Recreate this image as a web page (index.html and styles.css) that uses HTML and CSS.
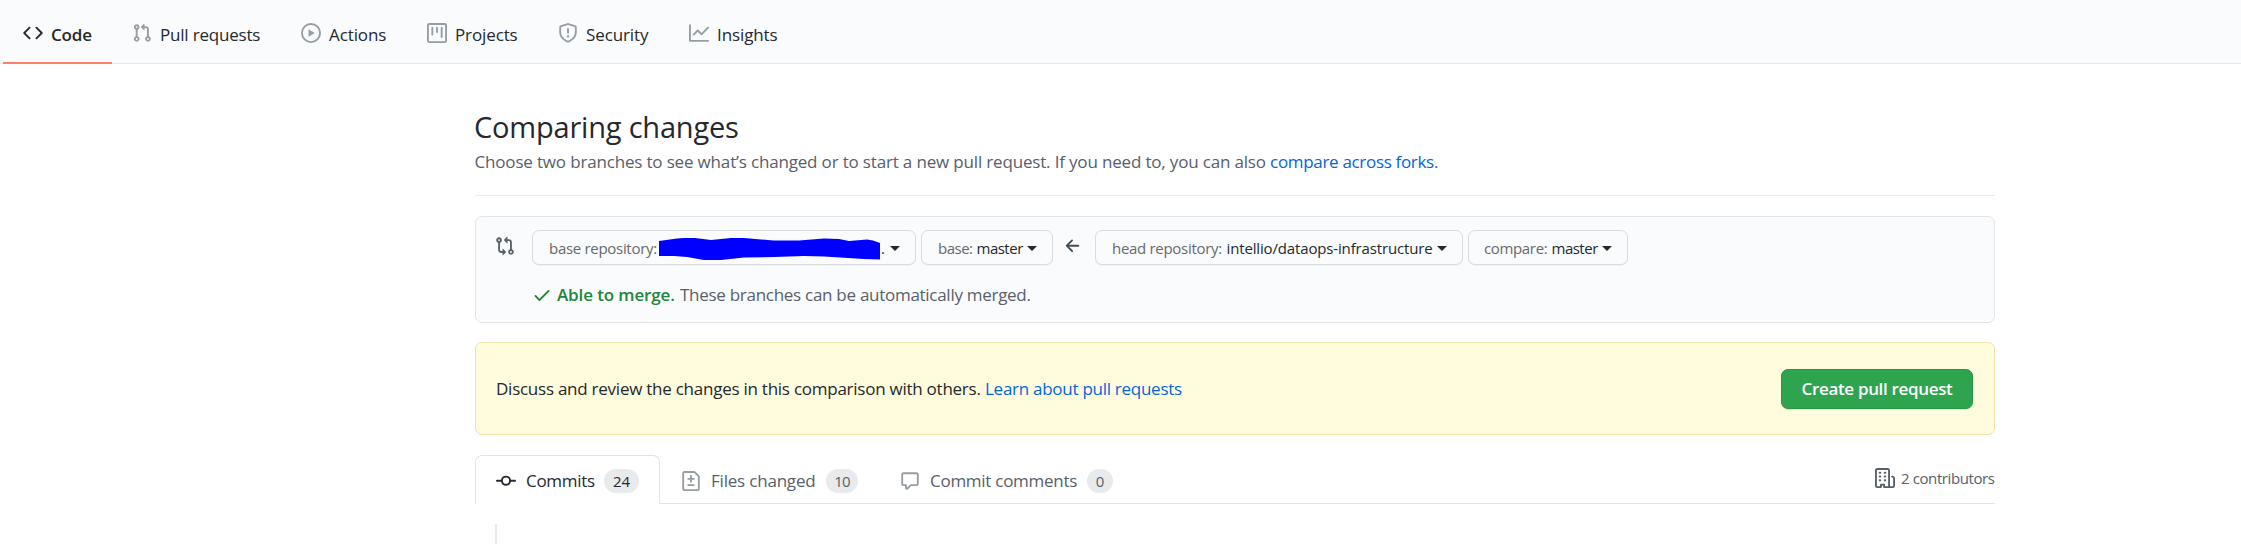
FILE: index.html
```html
<!DOCTYPE html>
<html lang="en">
<head>
<meta charset="utf-8">
<title>Comparing changes</title>
<link rel="stylesheet" href="styles.css">
</head>
<body>
<nav class="repo-nav">
  <a class="nav-item active"><svg class="icon" viewBox="0 0 16 16"><path fill-rule="evenodd" d="M4.72 3.22a.75.75 0 011.06 1.06L2.06 8l3.72 3.72a.75.75 0 11-1.06 1.06L.47 8.53a.75.75 0 010-1.06l4.25-4.25zm6.56 0a.75.75 0 10-1.06 1.06L13.94 8l-3.72 3.72a.75.75 0 101.06 1.06l4.25-4.25a.75.75 0 000-1.06l-4.25-4.25z"/></svg><span class="label w-code">Code</span></a>
  <a class="nav-item"><svg class="icon" viewBox="0 0 16 16"><path fill-rule="evenodd" d="M7.177 3.073L9.573.677A.25.25 0 0110 .854v4.792a.25.25 0 01-.427.177L7.177 3.427a.25.25 0 010-.354zM3.75 2.5a.75.75 0 100 1.5.75.75 0 000-1.5zm-2.25.75a2.25 2.25 0 113 2.122v5.256a2.251 2.251 0 11-1.5 0V5.372A2.25 2.25 0 011.5 3.25zM11 2.5h-1V4h1a1 1 0 011 1v5.628a2.251 2.251 0 101.5 0V5A2.5 2.5 0 0011 2.5zm1 10.25a.75.75 0 111.5 0 .75.75 0 01-1.5 0zM3.75 12a.75.75 0 100 1.5.75.75 0 000-1.5z"/></svg><span class="label w-pulls">Pull requests</span></a>
  <a class="nav-item"><svg class="icon" viewBox="0 0 16 16"><path fill-rule="evenodd" d="M1.5 8a6.5 6.5 0 1113 0 6.5 6.5 0 01-13 0zM8 0a8 8 0 100 16A8 8 0 008 0zM6.379 5.227A.25.25 0 006 5.442v5.117a.25.25 0 00.379.214l4.264-2.559a.25.25 0 000-.428L6.379 5.227z"/></svg><span class="label w-actions">Actions</span></a>
  <a class="nav-item"><svg class="icon" viewBox="0 0 16 16"><path fill-rule="evenodd" d="M1.75 0A1.75 1.75 0 000 1.75v12.5C0 15.216.784 16 1.75 16h12.5A1.75 1.75 0 0016 14.25V1.75A1.75 1.75 0 0014.25 0H1.75zM1.5 1.75a.25.25 0 01.25-.25h12.5a.25.25 0 01.25.25v12.5a.25.25 0 01-.25.25H1.75a.25.25 0 01-.25-.25V1.75zM11.75 3a.75.75 0 00-.75.75v7.5a.75.75 0 001.5 0v-7.5a.75.75 0 00-.75-.75zm-8.25.75a.75.75 0 011.5 0v5.5a.75.75 0 01-1.5 0v-5.5zM8 3a.75.75 0 00-.75.75v3.5a.75.75 0 001.5 0v-3.5A.75.75 0 008 3z"/></svg><span class="label w-projects">Projects</span></a>
  <a class="nav-item"><svg class="icon" viewBox="0 0 16 16"><path fill-rule="evenodd" d="M7.467.133a1.75 1.75 0 011.066 0l5.25 1.68A1.75 1.75 0 0115 3.48V7c0 1.566-.32 3.182-1.303 4.682-.983 1.498-2.585 2.813-5.032 3.855a1.7 1.7 0 01-1.33 0c-2.447-1.042-4.049-2.357-5.032-3.855C1.32 10.182 1 8.566 1 7V3.48a1.75 1.75 0 011.217-1.667l5.25-1.68zm.61 1.429a.25.25 0 00-.153 0l-5.25 1.68a.25.25 0 00-.174.238V7c0 1.358.275 2.666 1.057 3.86.784 1.194 2.121 2.34 4.366 3.297a.2.2 0 00.154 0c2.245-.956 3.582-2.104 4.366-3.298C13.225 9.666 13.5 8.36 13.5 7V3.48a.25.25 0 00-.174-.237l-5.25-1.68zM9 10.5a1 1 0 11-2 0 1 1 0 012 0zm-.25-5.75a.75.75 0 10-1.5 0v3a.75.75 0 001.5 0v-3z"/></svg><span class="label w-security">Security</span></a>
  <a class="nav-item"><svg class="icon" viewBox="0 0 16 16"><path fill-rule="evenodd" d="M1.5 1.75a.75.75 0 00-1.5 0v12.5c0 .414.336.75.75.75h14.5a.75.75 0 000-1.5H1.5V1.75zm14.28 2.53a.75.75 0 00-1.06-1.06L10 7.94 7.53 5.47a.75.75 0 00-1.06 0L3.22 8.72a.75.75 0 001.06 1.06L7 7.06l2.47 2.47a.75.75 0 001.06 0l5.25-5.25z"/></svg><span class="label w-insights">Insights</span></a>
</nav>
<main class="container">
  <header class="page-head">
    <h1 class="title">Comparing changes</h1>
    <p class="subtitle"><span class="w-sub">Choose two branches to see what’s changed or to start a new pull request. If you need to, you can also </span><a class="link w-forks">compare across forks</a>.</p>
  </header>
  <section class="range-editor">
    <svg class="icon compare-icon" viewBox="0 0 16 16"><path fill-rule="evenodd" d="M9.573.677L7.177 3.073a.25.25 0 000 .354l2.396 2.396A.25.25 0 0010 5.646V4h1a1 1 0 011 1v5.628a2.251 2.251 0 101.5 0V5A2.5 2.5 0 0011 2.5h-1V.854a.25.25 0 00-.427-.177zM6 12v-1.646a.25.25 0 01.427-.177l2.396 2.396a.25.25 0 010 .354l-2.396 2.396A.25.25 0 016 15.146V13.5H5A2.5 2.5 0 012.5 11V5.372a2.25 2.25 0 111.5 0V11a1 1 0 001 1h1zm6.75 0a.75.75 0 100 1.5.75.75 0 000-1.5zM4 3.25a.75.75 0 11-1.5 0 .75.75 0 011.5 0z"/></svg>
    <div class="range-body">
      <div class="range-row">
        <button class="select s-base-repo"><span class="key w-baserepo">base repository:</span><svg class="scribble" viewBox="0 0 221 22"><path d="M0 3 18 .5 25 0 36 0 52 2 72 0 85 0 115 2.600 140 2.600 165 .6 180 1 190 3 208 1.600 214 2.600 221 5V21.500L205 21 165 18.500 145 18 115 19 85 19.500 62 22 45 22 28 19 15 18 0 18Z"/></svg><span class="value dots">..</span><i class="caret"></i></button>
        <button class="select s-base"><span class="key w-base">base:</span><span class="value w-master">master</span><i class="caret"></i></button>
        <svg class="icon arrow" viewBox="0 0 16 16"><path fill-rule="evenodd" d="M7.780 12.530a.75.75 0 01-1.060 0L2.470 8.280a.75.75 0 010-1.060l4.250-4.250a.75.75 0 011.060 1.060L4.810 7h7.440a.75.75 0 010 1.500H4.810l2.970 2.970a.75.75 0 010 1.060z"/></svg>
        <button class="select s-head-repo"><span class="key w-headrepo">head repository:</span><span class="value w-repo">intellio/dataops-infrastructure</span><i class="caret"></i></button>
        <button class="select s-compare"><span class="key w-compare">compare:</span><span class="value w-master">master</span><i class="caret"></i></button>
      </div>
      <p class="merge-status"><svg class="icon check" viewBox="0 0 16 16"><path fill-rule="evenodd" d="M13.780 4.220a.75.75 0 010 1.060l-7.250 7.250a.75.75 0 01-1.060 0L2.220 9.280a.75.75 0 011.060-1.060L6 10.940l6.720-6.720a.75.75 0 011.060 0z"/></svg><strong class="able">Able to merge.</strong><span class="w-these">These branches can be automatically merged.</span></p>
    </div>
  </section>
  <section class="discuss">
    <p class="discuss-text"><span class="w-discuss">Discuss and review the changes in this comparison with others.</span><a class="link w-learn">Learn about pull requests</a></p>
    <button class="create">Create pull request</button>
  </section>
  <div class="tabs">
    <a class="tab selected"><svg class="icon" viewBox="0 0 16 16"><path fill-rule="evenodd" d="M10.500 7.750a2.500 2.500 0 11-5 0 2.500 2.500 0 015 0zm1.430.75a4.002 4.002 0 01-7.860 0H.75a.75.75 0 110-1.500h3.320a4.001 4.001 0 017.860 0h3.320a.75.75 0 110 1.500h-3.320z"/></svg><span class="label w-commits">Commits</span><span class="counter c-24">24</span></a>
    <a class="tab"><svg class="icon" viewBox="0 0 16 16"><path fill-rule="evenodd" d="M2.750 1.500a.25.25 0 00-.25.25v12.500c0 .138.112.25.25.25h10.500a.25.25 0 00.25-.25V4.664a.25.25 0 00-.073-.177l-2.914-2.914a.25.25 0 00-.177-.073H2.750zM1 1.750C1 .784 1.784 0 2.750 0h7.586c.464 0 .909.184 1.237.513l2.914 2.914c.329.328.513.773.513 1.237v9.586A1.750 1.750 0 0113.250 16H2.750A1.750 1.750 0 011 14.250V1.750zm7 1.500a.75.75 0 01.75.75v1.500h1.500a.75.75 0 010 1.500h-1.500v1.500a.75.75 0 01-1.500 0V7h-1.500a.75.75 0 010-1.500h1.500V4A.75.75 0 018 3.250zm-3 8a.75.75 0 01.75-.75h4.500a.75.75 0 010 1.500h-4.500a.75.75 0 01-.75-.75z"/></svg><span class="label w-files">Files changed</span><span class="counter c-10">10</span></a>
    <a class="tab"><svg class="icon" viewBox="0 0 16 16"><path fill-rule="evenodd" d="M2.750 2.500a.25.25 0 00-.25.25v7.500c0 .138.112.25.25.25h2a.75.75 0 01.75.75v2.190l2.720-2.720a.75.75 0 01.53-.22h4.500a.25.25 0 00.25-.25v-7.500a.25.25 0 00-.25-.25H2.750zM1 2.750C1 1.784 1.784 1 2.750 1h10.500c.966 0 1.750.784 1.750 1.750v7.500A1.750 1.750 0 0113.250 12H9.060l-2.573 2.573A1.457 1.457 0 014 13.543V12H2.750A1.750 1.750 0 011 10.250v-7.500z"/></svg><span class="label w-comments">Commit comments</span><span class="counter c-0">0</span></a>
    <div class="contributors"><svg class="icon" viewBox="0 0 16 16"><path fill-rule="evenodd" d="M1.500 14.250c0 .138.112.25.25.25H4v-1.250a.75.75 0 01.75-.75h2.500a.75.75 0 01.75.75v1.250h2.250a.25.25 0 00.25-.25V1.750a.25.25 0 00-.25-.25h-8.500a.25.25 0 00-.25.25v12.500zM1.750 16A1.750 1.750 0 010 14.250V1.750C0 .784.784 0 1.750 0h8.500C11.216 0 12 .784 12 1.750v12.500c0 .085-.006.168-.018.250h2.268a.25.25 0 00.25-.25V8.285a.25.25 0 00-.111-.208l-1.055-.703a.75.75 0 11.832-1.248l1.055.703c.487.325.779.871.779 1.456v5.965A1.750 1.750 0 0114.250 16h-3.500a.75.75 0 01-.197-.026c-.099.017-.2.026-.303.026h-3a.75.75 0 01-.75-.75V14h-1v1.250a.75.75 0 01-.75.75h-3zM3 3.750A.75.75 0 013.750 3h.5a.75.75 0 010 1.500h-.5A.75.75 0 013 3.750zM3.750 6a.75.75 0 000 1.500h.5a.75.75 0 000-1.500h-.5zM3 9.750A.75.75 0 013.750 9h.5a.75.75 0 010 1.500h-.5A.75.75 0 013 9.750zM7.750 9a.75.75 0 000 1.500h.5a.75.75 0 000-1.500h-.5zM7 6.750A.75.75 0 017.750 6h.5a.75.75 0 010 1.500h-.5A.75.75 0 017 6.750zM7.750 3a.75.75 0 000 1.500h.5a.75.75 0 000-1.500h-.5z"/></svg><span class="w-contrib">2 contributors</span></div>
  </div>
  <div class="timeline"></div>
</main>
</body>
</html>
```
FILE: styles.css
```css
* { box-sizing: border-box; }
body { margin: 0; height: 544px; overflow: hidden; background: #fff; color: #24292e; font: 17px/26px "Open Sans", "Noto Sans", sans-serif; }
h1, p { margin: 0; font-weight: 400; }
span, a, strong { white-space: nowrap; }
.icon { width: 20px; height: 20px; flex: none; fill: currentColor; }
.link { color: #0366d6; }

/* Repository navigation */
.repo-nav { display: flex; height: 64px; padding-left: 3px; background: #fafbfc; border-bottom: 1px solid #e6e8eb; }
.nav-item { display: flex; height: 64px; padding: 4px 20px 0; align-items: center; border-bottom: 2px solid transparent; }
.nav-item .icon { color: #959da5; margin-right: 8px; }
.nav-item .label { margin-top: 3px; }
.nav-item.active { border-color: #f9826c; font-weight: 600; }
.nav-item.active .icon { color: #24292e; }
.w-code { width: 41px; letter-spacing: -.2px; }
.w-pulls { width: 101px; letter-spacing: -.2px; }
.w-actions { width: 58px; letter-spacing: -.1px; }
.w-projects { width: 63px; letter-spacing: -.12px; }
.w-security { width: 63px; letter-spacing: -.12px; }
.w-insights { width: 61px; letter-spacing: -.1px; }

/* Page heading */
.container { width: 1520px; margin-left: 475px; }
.page-head { padding-top: 43px; height: 132px; border-bottom: 1px solid #eaecef; }
.title { font-size: 29px; line-height: 40px; letter-spacing: -.2px; text-indent: -1px; }
.subtitle { margin-top: 2px; color: #586069; text-indent: -.5px; }
.w-sub { letter-spacing: -.17px; }
.w-forks { letter-spacing: -.32px; }

/* Branch selection */
.range-editor { display: flex; height: 107px; margin-top: 20px; padding: 13px 20px 0; border: 1px solid #e1e4e8; border-radius: 7px; background: #fafbfc; }
.compare-icon { color: #586069; margin: 6px 17px 0 -1px; }
.range-row { display: flex; height: 35px; }
.select { display: flex; flex: none; align-items: center; height: 35px; padding: 0 0 0 16px; font: 15px/22px "Open Sans", "Noto Sans", sans-serif; color: #24292e; background: #fafbfc; border: 1px solid #d9dbdd; border-radius: 7px; box-shadow: 0 1px 0 rgba(27,31,35,.04); margin-right: 5px; }
.s-base-repo { width: 384px; }
.s-base { width: 132px; }
.s-head-repo { width: 368px; }
.s-compare { width: 160px; padding-left: 15px; }
.key { color: #666a6e; text-align: left; }
.value { font-weight: 500; text-align: left; }
.w-baserepo { width: 110px; letter-spacing: -.3px; }
.w-base { width: 38.5px; letter-spacing: -.5px; }
.w-master { width: 46px; letter-spacing: -.5px; }
.w-headrepo { width: 114.5px; letter-spacing: -.3px; }
.w-repo { width: 206px; letter-spacing: -.15px; }
.w-compare { width: 67.5px; letter-spacing: -.35px; }
.dots { width: 9px; margin-left: -3px; }
.caret { border: 5px solid transparent; border-top-color: #24292e; border-bottom: 0; margin: 2px 0 0 4px; }
.scribble { position: relative; z-index: 1; width: 221px; height: 22px; margin-top: 2px; fill: #00f; }
.arrow { margin: 6px 12px 0 5px; color: #444d56; }
.merge-status { display: flex; align-items: center; margin-top: 17px; color: #586069; }
.check { color: #22863a; margin-right: 5px; }
.able { width: 123px; color: #22863a; font-weight: 600; letter-spacing: -.12px; }
.w-these { letter-spacing: -.28px; }

/* Pull request prompt */
.discuss { display: flex; justify-content: space-between; align-items: center; height: 93px; margin-top: 19px; padding: 0 21px 0 20px; background: #fffbdd; border: 1px solid #f0e4ab; border-radius: 7px; }
.discuss-text { display: flex; }
.w-discuss { width: 489px; letter-spacing: -.25px; }
.w-learn { letter-spacing: -.27px; }
.create { width: 192px; height: 40px; padding: 1px 0 0; font: 600 17px/26px "Open Sans", "Noto Sans", sans-serif; letter-spacing: -.33px; color: #fff; background: #2ea44f; border: 1px solid #2a9447; border-radius: 7px; box-shadow: 0 1px 0 rgba(27,31,35,.1); }

/* Tabs */
.tabs { display: flex; height: 49px; margin-top: 20px; border-bottom: 1px solid #e1e4e8; }
.tab { display: flex; align-items: center; height: 49px; padding: 3px 21px 0; color: #586069; }
.tab .icon { color: #959da5; margin-right: 10px; }
.tab.selected { padding: 2px 20px 0; color: #24292e; background: #fff; border: 1px solid #e1e4e8; border-bottom: 0; border-radius: 7px 7px 0 0; }
.tab.selected .icon { color: #24292e; }
.w-commits { width: 68px; letter-spacing: -.3px; }
.w-files { width: 105px; letter-spacing: -.2px; }
.w-comments { width: 147px; letter-spacing: -.27px; }
.counter { height: 24px; border-radius: 12px; margin-left: 10px; background: #e8eaec; font: 500 15px/24px "Open Sans", "Noto Sans", sans-serif; text-align: center; }
.c-24 { width: 35px; }
.c-10 { width: 32px; letter-spacing: -.8px; }
.c-0 { width: 26px; }
.contributors { display: flex; align-items: center; margin-left: auto; padding-bottom: 2px; font-size: 15px; color: #586069; }
.contributors .icon { margin-right: 6px; }
.w-contrib { width: 94px; letter-spacing: -.4px; }
.timeline { width: 2px; height: 20px; margin: 20px 0 0 20px; background: #e6e8eb; }
```
